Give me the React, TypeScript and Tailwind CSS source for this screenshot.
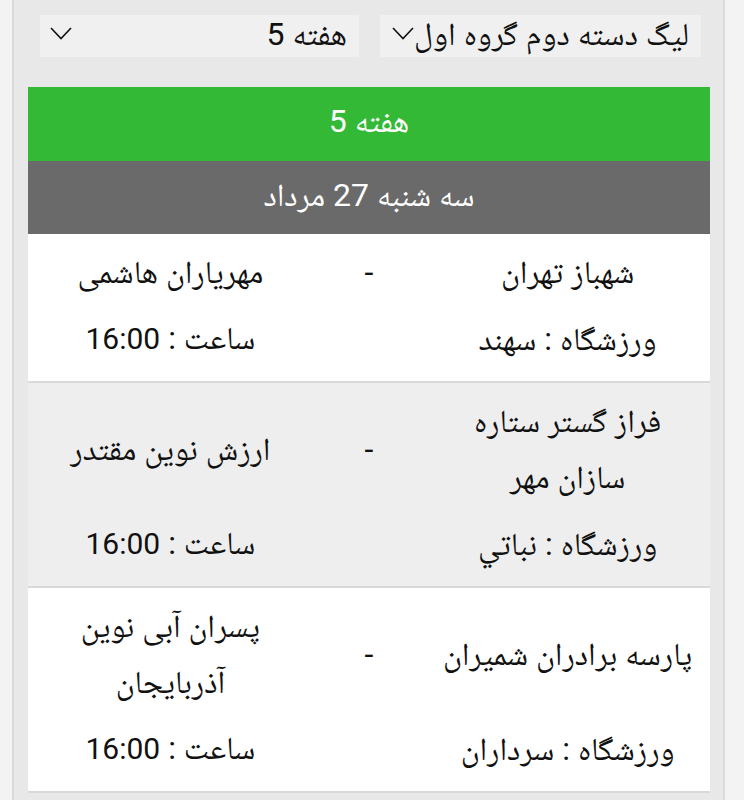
import React from "react";

const FONT = "font-['Roboto','Noto_Naskh_Arabic','Noto_Sans_Arabic','DejaVu_Sans',sans-serif]";

function Chevron() {
  return (
    <svg width="22" height="13" viewBox="0 0 22 13" className="shrink-0">
      <polyline points="1,1 11,11.5 21,1" fill="none" stroke="#111" strokeWidth="1.6" />
    </svg>
  );
}

type Match = { home: string[]; away: string[]; stadium: string; bg: string };

const matches: Match[] = [
  { home: ["شهباز تهران"], away: ["مهریاران هاشمی"], stadium: "ورزشگاه : سهند", bg: "bg-white" },
  { home: ["فراز گستر ستاره", "سازان مهر"], away: ["ارزش نوین مقتدر"], stadium: "ورزشگاه : نباتي", bg: "bg-[#eeeeee]" },
  { home: ["پارسه برادران شمیران"], away: ["پسران آبی نوین", "آذربایجان"], stadium: "ورزشگاه : سرداران", bg: "bg-white" },
];

function MatchRow({ m }: { m: Match }) {
  return (
    <div className={`${m.bg} border-b-2 border-[#d9d9d9] px-[10px] pt-[10px] pb-[14px] text-[#111]`}>
      <div className="grid grid-cols-[2fr_1fr_2fr] items-center text-center text-[32px] leading-[56px]">
        <div>{m.home.map((t) => <div key={t}>{t}</div>)}</div>
        <div>-</div>
        <div>{m.away.map((t) => <div key={t}>{t}</div>)}</div>
      </div>
      <div className="mt-[10px] grid grid-cols-[2fr_1fr_2fr] items-center text-center text-[32px] leading-[56px]">
        <div>{m.stadium}</div>
        <div />
        <div>
          ساعت : <span className="text-[30px]">16:00</span>
        </div>
      </div>
    </div>
  );
}

export default function App() {
  return (
    <div className={`min-h-[800px] w-[744px] bg-[#f3f3f3] pl-[12px] ${FONT}`}>
      <div dir="rtl" className="min-h-[800px] w-[713px] border-x-2 border-[#dadada] bg-[#e8e8e8] pl-[14px] pr-[13px] pt-[15px]">
        <div className="flex gap-[21px] pl-[12px] pr-[9px]">
          <div className="flex h-[42px] w-[321px] items-center overflow-hidden bg-[#f0f0f0] pb-[5px] pr-[12px]">
            <span className="whitespace-nowrap text-[32px] leading-none text-[#111]">ليگ دسته دوم گروه اول</span>
            <Chevron />
          </div>
          <div className="flex h-[42px] flex-1 items-center bg-[#f0f0f0] pb-[5px] pl-[10px] pr-[12px]">
            <span className="whitespace-nowrap text-[32px] leading-none text-[#111]">هفته 5</span>
            <div className="flex-1" />
            <Chevron />
          </div>
        </div>
        <div className="mt-[30px] flex h-[74px] items-center justify-center bg-[#33b935] pb-[6px] text-[32px] text-white">
          هفته 5
        </div>
        <div className="flex h-[73px] items-center justify-center bg-[#6a6a6a] pb-[6px] text-[32px] text-white">
          سه شنبه 27 مرداد
        </div>
        {matches.map((m, i) => (
          <MatchRow key={i} m={m} />
        ))}
      </div>
    </div>
  );
}
